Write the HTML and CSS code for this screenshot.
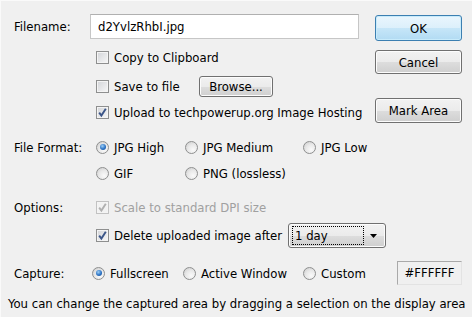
FILE: index.html
```html
<!DOCTYPE html>
<html lang="en">

<head>
    <meta charset="UTF-8">
    <meta name="viewport" content="width=device-width, initial-scale=1.0">
    <title>Capture Options</title>
    <link rel="stylesheet" href="styles.css">
</head>

<body>
    <div class="dialog">
        <div class="top">
            <div class="main">
                <div class="row row-file">
                    <span class="label">Filename:</span>
                    <div class="field">d2YvlzRhbI.jpg</div>
                </div>
                <div class="row row-copy">
                    <span class="label"></span>
                    <span class="check"></span>
                    <span class="text">Copy to Clipboard</span>
                </div>
                <div class="row row-save">
                    <span class="label"></span>
                    <span class="opt opt-save">
                        <span class="check"></span>
                        <span class="text">Save to file</span>
                    </span>
                    <div class="btn btn-browse">Browse...</div>
                </div>
                <div class="row row-upload">
                    <span class="label"></span>
                    <span class="check checked">
                        <svg viewBox="0 0 11 11" width="11" height="11"><path d="M2.2 5.6 L4.4 8.6 L8.8 1.8" /></svg>
                    </span>
                    <span class="text">Upload to techpowerup.org Image Hosting</span>
                </div>
            </div>
            <div class="buttons">
                <div class="btn btn-ok">OK</div>
                <div class="btn btn-cancel">Cancel</div>
                <div class="btn btn-mark">Mark Area</div>
            </div>
        </div>

        <div class="row row-jpg">
            <span class="label">File Format:</span>
            <span class="opt fmt-1"><span class="radio selected"></span><span class="text">JPG High</span></span>
            <span class="opt fmt-2"><span class="radio"></span><span class="text">JPG Medium</span></span>
            <span class="opt fmt-3"><span class="radio"></span><span class="text">JPG Low</span></span>
        </div>
        <div class="row row-gif">
            <span class="label"></span>
            <span class="opt fmt-1"><span class="radio"></span><span class="text">GIF</span></span>
            <span class="opt fmt-2"><span class="radio"></span><span class="text">PNG (lossless)</span></span>
        </div>

        <div class="row row-options">
            <span class="label">Options:</span>
            <span class="check checked disabled">
                <svg viewBox="0 0 11 11" width="11" height="11"><path d="M2.2 5.6 L4.4 8.6 L8.8 1.8" /></svg>
            </span>
            <span class="text muted">Scale to standard DPI size</span>
        </div>
        <div class="row row-delete">
            <span class="label"></span>
            <span class="opt opt-delete">
                <span class="check checked">
                    <svg viewBox="0 0 11 11" width="11" height="11"><path d="M2.2 5.6 L4.4 8.6 L8.8 1.8" /></svg>
                </span>
                <span class="text">Delete uploaded image after</span>
            </span>
            <div class="combo">
                <span class="combo-value">1 day</span>
                <svg class="combo-arrow" viewBox="0 0 7 4" width="7" height="4"><path d="M0 0 H7 L3.5 4 Z" /></svg>
            </div>
        </div>

        <div class="row row-capture">
            <span class="label">Capture:</span>
            <span class="opt cap-1"><span class="radio selected"></span><span class="text">Fullscreen</span></span>
            <span class="opt cap-2"><span class="radio"></span><span class="text">Active Window</span></span>
            <span class="opt cap-3"><span class="radio"></span><span class="text">Custom</span></span>
            <div class="color-box">#FFFFFF</div>
        </div>

        <p class="hint">You can change the captured area by dragging a selection on the display area</p>
    </div>
</body>

</html>
```

FILE: styles.css
```css
* {
    box-sizing: border-box;
}

body {
    margin: 0;
    padding: 0;
    background: #f0f0f0;
    color: #000;
    font-family: "DejaVu Sans Condensed", "DejaVu Sans", sans-serif;
    font-size: 13px;
}

.dialog {
    width: 472px;
    height: 317px;
    padding: 13px 10px 0 13px;
    border-top: 1px solid #fafafa;
    border-left: 1px solid #fafafa;
}

.top {
    display: flex;
    gap: 16px;
}

.main {
    width: 345px;
}

.buttons {
    width: 88px;
    display: flex;
    flex-direction: column;
    padding-top: 1px;
}

.row {
    display: flex;
    align-items: center;
    height: 24px;
}

.label {
    width: 76px;
    flex: none;
}

.text {
    white-space: nowrap;
}

.muted {
    color: #a0a0a0;
}

.opt {
    display: flex;
    align-items: center;
    flex: none;
}

/* vertical rhythm */
.row-file { height: 25px; }
.row-copy { margin-top: 6px; }
.row-save { margin-top: 5px; }
.row-upload { margin-top: 2px; }
.row-jpg { margin-top: 11px; }
.row-gif { margin-top: 2px; }
.row-options { margin-top: 10px; }
.row-delete { margin-top: 4px; height: 25px; }
.row-capture { margin-top: 13px; }

.field {
    flex: 1;
    height: 25px;
    background: #fff;
    border: 1px solid #c6c6c6;
    border-top-color: #b0b0b0;
    padding: 0 7px;
    line-height: 23px;
}

/* checkboxes */
.check {
    width: 13px;
    height: 13px;
    flex: none;
    margin: 0 5px 0 6px;
    border: 1px solid #8e8f8f;
    background: linear-gradient(135deg, #d2d4d8, #f7f7f7);
    box-shadow: inset 0 0 0 1px #f4f4f4;
    display: flex;
    align-items: center;
    justify-content: center;
}

.check svg path {
    fill: none;
    stroke: #3b5588;
    stroke-width: 1.9;
}

.check.disabled {
    border-color: #c2c2c2;
    background: #f2f2f2;
}

.check.disabled svg path {
    stroke: #b0b0b0;
}

/* radios */
.radio {
    width: 13px;
    height: 13px;
    flex: none;
    margin: 0 5px 0 6px;
    border-radius: 50%;
    border: 1px solid #8e8f8f;
    background: radial-gradient(circle at 65% 70%, #fafafa 0, #e8e8e8 50%, #c9c9c9 100%);
    display: flex;
    align-items: center;
    justify-content: center;
}

.radio.selected::after {
    content: '';
    width: 6px;
    height: 6px;
    border-radius: 50%;
    background: radial-gradient(circle at 40% 35%, #9fd0f6 0, #2b72c4 55%, #174a8c 100%);
}

.fmt-1 { width: 89px; }
.fmt-2 { width: 118px; }

.cap-1 { width: 91px; }
.cap-2 { width: 120px; }

.cap-1 .radio,
.cap-2 .radio,
.cap-3 .radio {
    margin-left: 2px;
}

/* buttons */
.btn {
    display: flex;
    align-items: center;
    justify-content: center;
    border: 1px solid #707070;
    border-radius: 3px;
    background: linear-gradient(#f2f2f2 0%, #ebebeb 50%, #dddddd 51%, #cfcfcf 100%);
    box-shadow: inset 0 0 0 1px #fcfcfc;
}

.btn-ok {
    height: 26px;
    border-color: #3c7fb1;
    background: linear-gradient(#eaf6fd 0%, #dcf0fb 50%, #c6e6f8 51%, #b2dbf3 100%);
    box-shadow: inset 0 0 0 1px #c8ebfb;
}

.btn-cancel {
    height: 24px;
    margin-top: 9px;
}

.btn-mark {
    height: 25px;
    margin-top: 24px;
}

.opt-save {
    width: 109px;
}

.btn-browse {
    width: 74px;
    height: 21px;
}

.opt-delete {
    width: 198px;
}

.combo {
    width: 98px;
    height: 25px;
    display: flex;
    align-items: center;
    padding: 0 8px 0 3px;
    border: 1px solid #707070;
    border-radius: 3px;
    background: linear-gradient(#f2f2f2 0%, #ebebeb 50%, #dddddd 51%, #cfcfcf 100%);
    box-shadow: inset 0 0 0 1px #fcfcfc;
}

.combo-value {
    width: 72px;
    height: 19px;
    line-height: 17px;
    padding-left: 2px;
    border: 1px dotted #000;
}

.combo-arrow {
    margin-left: auto;
}

.combo-arrow path {
    fill: #000;
}

.color-box {
    margin-left: auto;
    width: 65px;
    height: 24px;
    border: 1px solid #a9a9a9;
    border-right-color: #e3e3e3;
    border-bottom-color: #e3e3e3;
    text-align: center;
    line-height: 22px;
}

.hint {
    margin: 7px 0 0 -6px;
    height: 24px;
    line-height: 24px;
    white-space: nowrap;
}
```
